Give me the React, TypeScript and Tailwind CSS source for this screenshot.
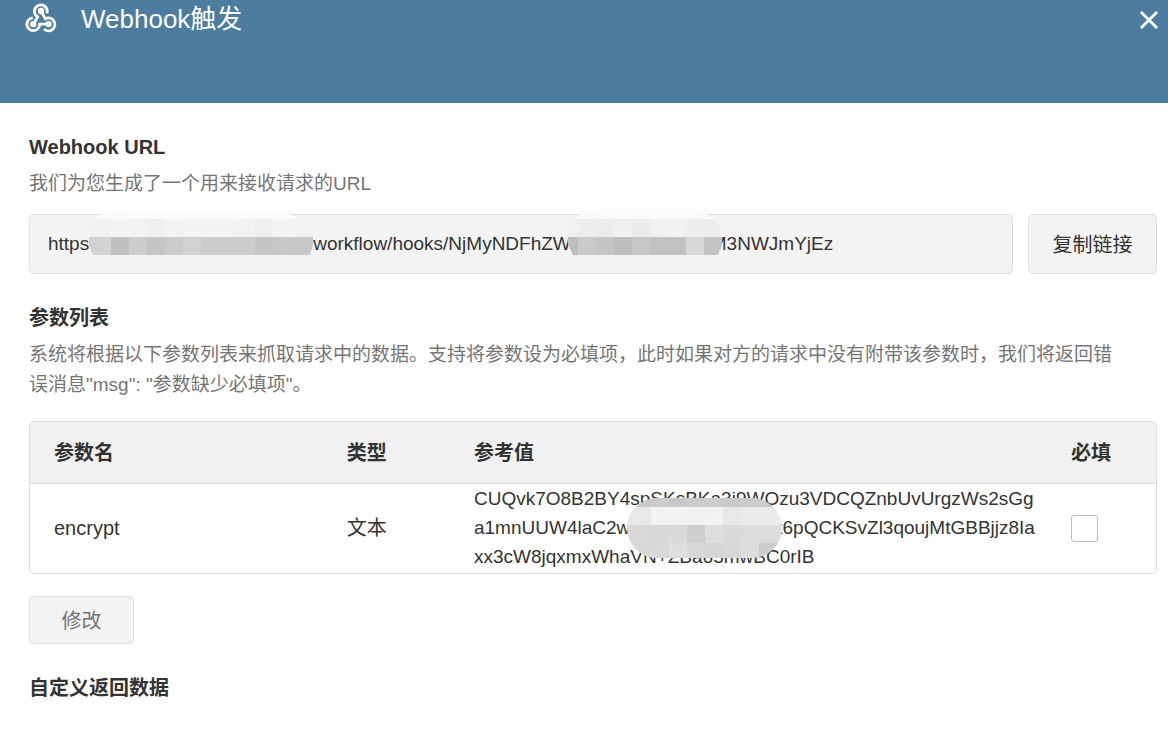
import type { ReactNode } from "react";

function WebhookIcon() {
  return (
    <svg width="32" height="30" viewBox="0 0 34 31" fill="none" stroke="#fff" aria-hidden="true">
      <g strokeWidth="3">
        <path d="M23.2 10.6A6.8 6.8 0 1 0 13.4 14.2L9.4 21.6" />
        <path d="M17 8L21.6 16.4A6.8 6.8 0 1 1 20.2 27.2" />
        <path d="M8.2 15.4A6.8 6.8 0 1 0 15.6 22H25" />
      </g>
      <g fill="#fff" stroke="none">
        <circle cx="17" cy="8" r="3.4" />
        <circle cx="8.8" cy="22" r="3.4" />
        <circle cx="25" cy="22" r="3.4" />
      </g>
    </svg>
  );
}

function CloseIcon() {
  return (
    <svg width="18" height="18" viewBox="0 0 18 18" stroke="#fff" strokeWidth="2.8" aria-hidden="true">
      <path d="M1 1L17 17M17 1L1 17" />
    </svg>
  );
}

function Tiles({ y, x = 0, height = 18, colors }: { y: number; x?: number; height?: number; colors: string[] }) {
  return (
    <>
      {colors.map((c, i) => (
        <rect key={i} x={x + i * 18} y={y} width="18" height={height} fill={c} shapeRendering="crispEdges" />
      ))}
    </>
  );
}

function UrlMaskWide() {
  return (
    <svg className="absolute -top-[19px] left-0 z-10" width="224" height="46" viewBox="0 0 224 46" aria-hidden="true">
      <clipPath id="mask-wide">
        <path d="M0 27H3Q2 8 14 3Q28 -2 44 2H186Q212 3 220 20V27H224V35L221 45H4L0 35Z" />
      </clipPath>
      <g clipPath="url(#mask-wide)">
        <rect width="224" height="9" fill="#fbfbfb" />
        <Tiles y={9} x={4} colors={["#f2f2f2", "#f4f4f4", "#f3f3f3", "#f0f0f0", "#f4f4f4", "#f5f5f5", "#f5f5f5", "#f5f5f5", "#f3f3f3", "#efefef", "#f4f4f4", "#f3f3f3", "#f3f3f3"]} />
        <Tiles y={27} x={4} colors={["#d2d2d2", "#c1c1c1", "#cdcdcd", "#c5c5c5", "#cbcbcb", "#d2d2d2", "#cccccc", "#cccccc", "#cccccc", "#c5c5c5", "#c8c8c8", "#c7c7c7", "#c8c8c8"]} />
        <rect y="27" width="4" height="18" fill="#cfcfcf" />
      </g>
    </svg>
  );
}

function UrlMaskNarrow() {
  return (
    <svg className="absolute -top-[21px] -left-[3px] z-10" width="155" height="48" viewBox="0 0 155 48" aria-hidden="true">
      <clipPath id="mask-narrow">
        <path d="M0 29Q3 2 30 1H122Q150 4 154 30V36L150 47H5L0 36Z" />
      </clipPath>
      <g clipPath="url(#mask-narrow)">
        <rect width="156" height="11" fill="#fafafa" />
        <Tiles y={11} x={-8} colors={["#f0f0f0", "#ededed", "#ececec", "#f0f0f0", "#ebebeb", "#f1f1f1", "#f2f2f2", "#eeeeee", "#eeeeee", "#eeeeee"]} />
        <Tiles y={29} x={-8} colors={["#bdbdbd", "#cacaca", "#c5c5c5", "#bebebe", "#c7c7c7", "#c2c2c2", "#c2c2c2", "#d8d8d8", "#c4c4c4", "#c4c4c4"]} />
      </g>
    </svg>
  );
}

function ValueMask() {
  return (
    <svg className="absolute -top-[15px] -left-[3px] z-10" width="156" height="60" viewBox="0 0 156 60" aria-hidden="true">
      <clipPath id="mask-value">
        <rect width="155" height="60" rx="30" />
      </clipPath>
      <g clipPath="url(#mask-value)">
        <Tiles y={0} x={-12} height={9} colors={["#c9c9c9", "#c9c9c9", "#cccccc", "#c8c8c8", "#cacaca", "#cccccc", "#c9c9c9", "#cbcbcb", "#cbcbcb", "#cbcbcb"]} />
        <Tiles y={9} x={-12} colors={["#e7e7e7", "#e8e8e8", "#f3f3f3", "#f3f3f3", "#f2f2f2", "#f3f3f3", "#e8e8e8", "#ebebeb", "#ebebeb", "#ebebeb"]} />
        <Tiles y={27} x={-12} colors={["#d8d8d8", "#d9d9d9", "#d8d8d8", "#dadada", "#cecece", "#dedede", "#dadada", "#dcdcdc", "#dcdcdc", "#dddddd"]} />
        <Tiles y={45} x={-12} height={15} colors={["#d8d8d8", "#d8d8d8", "#d9d9d9", "#dfdfdf", "#d8d8d8", "#d5d5d5", "#d8d8d8", "#dddddd", "#cccccc", "#cccccc"]} />
      </g>
    </svg>
  );
}

function Heading({ children }: { children: ReactNode }) {
  return <h2 className="text-[20px] leading-[30px] font-bold">{children}</h2>;
}

export default function App() {
  return (
    <div className="min-h-screen bg-white font-['Liberation_Sans','Noto_Sans_CJK_SC',sans-serif] text-[19px] leading-[30px] text-[#333]">
      <header className="flex h-[103px] items-start justify-between bg-[#4c7d9e] pr-[10px] pl-[25px] text-white">
        <div className="flex items-start gap-6 pt-[3px]">
          <WebhookIcon />
          <h1 className="text-[26px] leading-8">Webhook触发</h1>
        </div>
        <button type="button" aria-label="关闭" className="pt-[11px]">
          <CloseIcon />
        </button>
      </header>

      <main className="pr-[11px] pb-7 pl-[29px]">
        <section className="pt-[29px]">
          <Heading>Webhook URL</Heading>
          <p className="mt-[7px] text-[#757575]">我们为您生成了一个用来接收请求的URL</p>
          <div className="mt-[15px] flex gap-[15px]">
            <div className="flex h-[60px] min-w-0 flex-1 items-center rounded-[5px] border border-[#ddd] bg-[#f3f3f3] pl-[18px]">
              <span>https</span>
              <span className="relative h-[30px] w-[224px] shrink-0">
                <UrlMaskWide />
              </span>
              <span>workflow/hooks/NjMyNDFhZW</span>
              <span className="relative h-[30px] w-[140px] shrink-0">
                <UrlMaskNarrow />
              </span>
              <span>M3NWJmYjEz</span>
            </div>
            <button type="button" className="h-[60px] w-[129px] shrink-0 rounded-[5px] border border-[#ddd] bg-[#f3f3f3] pt-[2px] text-[20px]">
              复制链接
            </button>
          </div>
        </section>

        <section className="pt-[29px]">
          <Heading>参数列表</Heading>
          <p className="mt-[7px] text-[#757575]">
            系统将根据以下参数列表来抓取请求中的数据。支持将参数设为必填项，此时如果对方的请求中没有附带该参数时，我们将返回错
            <br />
            误消息"msg": "参数缺少必填项"。
          </p>
          <div className="mt-[21px] overflow-hidden rounded-[5px] border border-[#ddd]">
            <table className="w-full table-fixed border-collapse text-left text-[20px]">
              <colgroup>
                <col className="w-[26%]" />
                <col className="w-[11.3%]" />
                <col />
                <col className="w-[109px]" />
              </colgroup>
              <thead className="bg-[#f1f1f1]">
                <tr className="h-[61px] border-b border-[#ddd]">
                  <th scope="col" className="pt-[2px] pl-6">参数名</th>
                  <th scope="col" className="pt-[2px] pl-6">类型</th>
                  <th scope="col" className="pt-[2px] pl-6">参考值</th>
                  <th scope="col" className="pt-[2px] pl-6">必填</th>
                </tr>
              </thead>
              <tbody>
                <tr>
                  <td className="pl-6">encrypt</td>
                  <td className="pl-6">文本</td>
                  <td className="pb-[2px] pl-6 text-[19px] leading-[29px] whitespace-nowrap">
                    <div>CUQvk7O8B2BY4spSKsBKa3j9WOzu3VDCQZnbUvUrgzWs2sGg</div>
                    <div className="flex">
                      <span>a1mnUUW4laC2w</span>
                      <span className="relative w-[147px] shrink-0">
                        <ValueMask />
                      </span>
                      <span>t6pQCKSvZl3qoujMtGBBjjz8Ia</span>
                    </div>
                    <div>xx3cW8jqxmxWhaVN+ZBa65mwBC0rIB</div>
                  </td>
                  <td className="pl-6">
                    <input type="checkbox" aria-label="必填" className="block size-[27px] appearance-none rounded-[3px] border border-[#bbb] bg-white checked:bg-[#4c7d9e]" />
                  </td>
                </tr>
              </tbody>
            </table>
          </div>
          <button type="button" className="mt-[22px] block h-12 w-[105px] rounded-[4px] border border-[#ddd] bg-[#f3f3f3] pt-[2px] text-[20px] text-[#757575]">
            修改
          </button>
        </section>

        <section className="pt-[29px]">
          <Heading>自定义返回数据</Heading>
        </section>
      </main>
    </div>
  );
}
